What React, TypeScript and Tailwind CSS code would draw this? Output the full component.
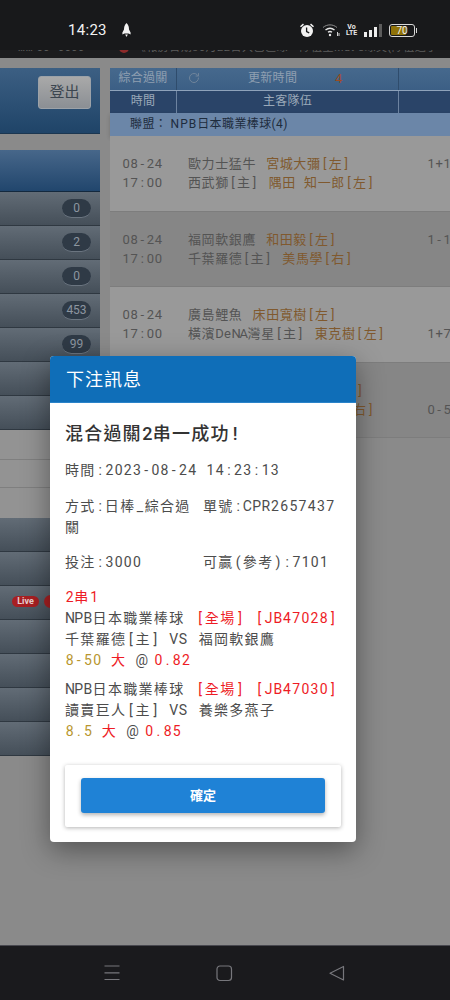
import React from 'react';
import { RotateCw } from 'lucide-react';

const font = { fontFamily: 'Roboto, "Noto Sans CJK TC", sans-serif' };

const counts = ['0', '2', '0', '453', '99', '', ''];

const games = [
  { home: '歐力士猛牛', homeP: '宮城大彌[左]', away: '西武獅[主]', awayP: '隅田 知一郎[左]', line: '1+1', low: false, dark: false },
  { home: '福岡軟銀鷹', homeP: '和田毅[左]', away: '千葉羅德[主]', awayP: '美馬學[右]', line: '1-1', low: false, dark: true },
  { home: '廣島鯉魚', homeP: '床田寬樹[左]', away: '橫濱DeNA灣星[主]', awayP: '東克樹[左]', line: '1+7', low: true, dark: false },
  { home: '養樂多燕子', homeP: '吉村貢司郎[左]', away: '讀賣巨人[主]', awayP: '戶鄉 翔征[右]', line: '0-5', low: true, dark: true },
];

// the app's font sets latin, digits and brackets on a fixed pitch, CJK keeps its own width
const Fixed: React.FC<{ text: string; pitch?: 'sm' | 'md' | 'lg' }> = ({ text, pitch = 'md' }) => {
  const width = pitch === 'sm' ? 'w-[8.1px]' : pitch === 'lg' ? 'w-[11px]' : 'w-[9.2px]';
  return (
    <>
      {text.split('').map((ch, i) =>
        ch.charCodeAt(0) < 128 ? (
          <span key={i} className={`inline-block text-center tracking-normal ${width}`}>
            {ch === ' ' ? '\u00a0' : ch}
          </span>
        ) : (
          <React.Fragment key={i}>{ch}</React.Fragment>
        ),
      )}
    </>
  );
};

const SideRow: React.FC<{ count?: string; live?: boolean }> = ({ count, live }) => (
  <div className="h-[34px] flex items-center justify-end pr-[9px] bg-gradient-to-b from-[#626c76] to-[#454f59] border-b border-[#2f3841] relative">
    {live && (
      <div className="absolute left-[12px] top-[10px] h-[11px] w-[27px] rounded-full bg-[#a81f22] text-[#e8d0d0] text-[9px] font-bold leading-[11px] text-center">
        Live
      </div>
    )}
    {live && <div className="absolute left-[44px] top-[9px] h-[13px] w-[13px] rounded-full bg-[#a81f22]" />}
    {count && (
      <div className="h-[19px] w-[29px] rounded-full bg-[#2f3a46] border-b border-[#6b7580] text-[#8d96a0] text-[12px] leading-[18px] text-center">
        {count}
      </div>
    )}
  </div>
);

const GameRow: React.FC<{ game: (typeof games)[number] }> = ({ game }) => (
  <div className={`h-[75.5px] flex items-center pl-[12px] border-b border-[#7d7d7d] text-[13px] leading-[19px] text-[#545454] ${game.dark ? 'bg-[#868686]' : 'bg-[#999999]'}`}>
    <div className="w-[66px] shrink-0">
      <div><Fixed text="08-24" pitch="sm" /></div>
      <div><Fixed text="17:00" pitch="sm" /></div>
    </div>
    <div className="w-[239px] shrink-0 tracking-[0.6px] whitespace-nowrap">
      <div>
        <Fixed text={game.home + ' '} pitch="sm" />
        <span className="ml-[2px] text-[#80592e]"><Fixed text={game.homeP} pitch="sm" /></span>
      </div>
      <div>
        <Fixed text={game.away + ' '} pitch="sm" />
        <span className="ml-[2px] text-[#80592e]"><Fixed text={game.awayP} pitch="sm" /></span>
      </div>
    </div>
    <div className={`whitespace-nowrap ${game.low ? 'mt-[19px]' : 'mb-[19px]'}`}>
      <Fixed text={game.line} pitch="sm" />
    </div>
  </div>
);

const BetLeg: React.FC<{ code: string; teams: string; opp: string; line: string; odds: string }> = ({ code, teams, opp, line, odds }) => (
  <div>
    <div className="whitespace-nowrap">
      <Fixed text="NPB日本職業棒球 " />
      <span className="ml-[2px] text-[#ee1c25]"><Fixed text={`[全場] `} /></span>
      <span className="ml-[1px] text-[#ee1c25]"><Fixed text={`[${code}]`} /></span>
    </div>
    <div className="whitespace-nowrap">
      <Fixed text={`${teams} VS `} />
      <span className="ml-[2px]">{opp}</span>
    </div>
    <div className="whitespace-nowrap">
      <span className="text-[#b8962e]"><Fixed text={line} /></span>
      <span className="text-[#ee1c25]"><Fixed text=" 大" /></span>
      <Fixed text=" @ " />
      <span className="text-[#ee1c25]"><Fixed text={odds} /></span>
    </div>
  </div>
);

const StatusIcons = () => (
  <div className="ml-auto flex items-center mr-[33px]">
    <svg width="16" height="16" viewBox="0 0 16 16" fill="#f2f2f2">
      <circle cx="8" cy="9" r="6" />
      <path d="M1 4.2 4 1.6 5 2.7 2 5.3zM15 4.2 12 1.6 11 2.7 14 5.3z" />
      <path d="M7.6 5.5v4l2.6 1.4" stroke="#18191b" strokeWidth="1.3" fill="none" />
    </svg>
    <svg className="ml-[7px]" width="18" height="14" viewBox="0 0 18 14" fill="none" stroke="#e8e8e8">
      <path d="M1 4.5C5 1 11 1 15 4.5" strokeWidth="1" stroke="#8d8d8d" />
      <path d="M3.5 7C6.5 4.6 9.5 4.6 12.5 7" strokeWidth="1.4" />
      <path d="M6 9.3c1.400-1 2.600-1 4 0" strokeWidth="1.4" />
      <circle cx="8" cy="12" r="1.2" fill="#e8e8e8" stroke="none" />
      <path d="M15.500 9v4M17 10v3" strokeWidth="0.9" />
    </svg>
    <div className="ml-[6px] w-[11px] text-[7px] leading-[6px] font-bold text-[#e8e8e8] text-center">
      <div>Vo</div>
      <div>LTE</div>
    </div>
    <div className="ml-[7px] flex items-end gap-[2px] h-[13px]">
      <div className="w-[3px] h-[5px] bg-[#ededed]" />
      <div className="w-[3px] h-[7px] bg-[#ededed]" />
      <div className="w-[3px] h-[10px] bg-[#ededed]" />
      <div className="w-[3px] h-[13px] bg-[#5c5c5c]" />
    </div>
    <div className="ml-[7px] relative h-[13px] w-[26px] rounded-[3px] border border-[#d8d8d8] p-[1px]">
      <div className="h-full w-[68%] rounded-[1px] bg-[#8f7208]" />
      <div className="absolute inset-0 text-center text-[10px] leading-[11px] text-[#f1f1f1]">70</div>
    </div>
    <div className="ml-[1px] h-[5px] w-[1px] bg-[#d8d8d8]" />
  </div>
);

export default function App() {
  return (
    <div className="relative h-[1000px] w-[450px] overflow-hidden flex flex-col bg-[#8a8a8a]" style={font}>
      {/* status bar */}
      <div className="h-[50px] shrink-0 bg-[#18191b] flex items-center pt-[10px] pl-[68px]">
        <span className="text-[15px] text-[#f2f2f2] tracking-[0.3px]">14:23</span>
        <svg className="ml-[15px]" width="9" height="14" viewBox="0 0 9 14" fill="#f2f2f2">
          <path d="M4.500 0C6.500 2 7 4 7 6.500L8.600 9.500V11.500L6.500 10.500H2.500L.4 11.500V9.500L2 6.500C2 4 2.500 2 4.500 0Z" />
          <path d="M3.200 11.500h2.600L4.500 14z" />
        </svg>
        <StatusIcons />
      </div>

      {/* marquee strip, cut off by the page */}
      <div className="h-[8px] shrink-0 bg-[#1c1c1e] overflow-hidden relative">
        <div className="absolute -top-[9px] left-0 flex items-center whitespace-nowrap text-[11px] leading-[14px] text-[#5c5c5c] tracking-[0.5px]">
          <span className="w-[50px] text-right">…… 00</span>
          <span className="ml-[8px]">0000</span>
          <span className="ml-[34px] h-[10px] w-[10px] rounded-full bg-[#8c2a2a]" />
          <span className="ml-[6px]">《報房日期30月22日大巴區球，隊伍主Mat 8球員(隊伍送手</span>
        </div>
      </div>

      <div className="flex-1 flex pt-[10px] min-h-0">
        {/* left menu */}
        <div className="w-[100px] shrink-0">
          <div className="h-[66px] bg-gradient-to-b from-[#3c5f83] to-[#1f4468] border-b border-[#1b3650] flex justify-end items-start pt-[8px] pr-[9px]">
            <div className="h-[33px] w-[53px] rounded-[3px] bg-gradient-to-b from-[#a9a9a9] to-[#8b8f94] border border-[#9ca2a8] text-[#3c4650] text-[15px] leading-[31px] text-center">
              登出
            </div>
          </div>
          <div className="mt-[16px] h-[42px] bg-gradient-to-b from-[#47678a] to-[#21466d] border-b border-[#14293e]" />
          {counts.map((c, i) => (
            <SideRow key={i} count={c} />
          ))}
          <div className="h-[30px] bg-[#939393] border-b border-[#7f7f7f]" />
          <div className="h-[28px] bg-[#939393] border-b border-[#7f7f7f]" />
          <div className="h-[30px] bg-[#939393]" />
          <SideRow />
          <SideRow />
          <SideRow live />
          <SideRow />
          <SideRow />
          <SideRow />
          <SideRow />
        </div>

        {/* odds table */}
        <div className="ml-[10px] flex-1 min-w-0 text-[12px]">
          <div className="h-[22px] flex bg-gradient-to-b from-[#46698d] to-[#3c5f85] text-[#8f9fb1] leading-[21px] tracking-[0.3px]">
            <div className="w-[67px] text-center border-r border-[#2f4c6c]">綜合過關</div>
            <div className="w-[222px] relative pl-[71px] border-r border-[#2f4c6c]">
              <RotateCw className="absolute left-[11px] top-[4px] h-[12px] w-[12px] text-[#6f849b]" />
              <span>更新時間</span>
              <span className="absolute left-[158px] text-[13px] text-[#9c4a22]">4</span>
            </div>
          </div>
          <div className="h-[23px] flex bg-[#2a4468] border-t border-[#8ea2ba] text-[#9aa9b9] leading-[21px] tracking-[0.3px]">
            <div className="w-[67px] text-center border-r border-[#6d83a0]">時間</div>
            <div className="w-[222px] text-center border-r border-[#6d83a0]">主客隊伍</div>
          </div>
          <div className="h-[23px] bg-[#6b86a8] pl-[20px] leading-[23px] text-[#1e2c3d] tracking-[0.4px] shadow-[0_2px_4px_rgba(0,0,0,0.18)]">
            聯盟： <span className="tracking-[1px]">NPB</span>日本職業棒球(4)
          </div>
          {games.map((g, i) => (
            <GameRow key={i} game={g} />
          ))}
        </div>
      </div>

      {/* nav bar */}
      <div className="h-[55px] shrink-0 bg-[#1a1a1d] border-t border-[#48484f] relative">
        <svg className="absolute left-[104px] top-[19px]" width="17" height="16" viewBox="0 0 17 16" fill="none" stroke="#77777c" strokeWidth="1.200">
          <path d="M.5 1h15M.5 7.800h15M.5 14.500h15" />
        </svg>
        <svg className="absolute left-[216px] top-[19px]" width="17" height="17" viewBox="0 0 17 17" fill="none" stroke="#77777c" strokeWidth="1.200">
          <rect x="1" y="1" width="14.500" height="14.500" rx="3" />
        </svg>
        <svg className="absolute left-[329px] top-[19px]" width="16" height="17" viewBox="0 0 16 17" fill="none" stroke="#77777c" strokeWidth="1.200">
          <path d="M14.500 1.500v13.500L1 8.200z" strokeLinejoin="round" />
        </svg>
      </div>

      {/* bet dialog */}
      <div className="absolute left-[50px] top-[356px] w-[306px] h-[486px] rounded-[4px] bg-white overflow-hidden shadow-[0_8px_28px_rgba(0,0,0,0.4)] flex flex-col text-[14px] leading-[21px] tracking-[1.300px] text-[#4c4c4c]">
        <div className="h-[47px] shrink-0 bg-[#0f6eb8] border-b border-[#2a83c9] pl-[16px] text-[18px] leading-[47px] tracking-[1px] text-white">
          下注訊息
        </div>
        <div className="px-[15px] pt-[19px] flex-1 flex flex-col">
          <div className="text-[18px] leading-[24px] font-medium tracking-[1.200px] text-[#333333]">
            <Fixed text="混合過關2串一成功!" pitch="lg" />
          </div>
          <div className="mt-[14px]"><Fixed text="時間:2023-08-24 14:23:13" /></div>
          <div className="mt-[15px] grid grid-cols-2">
            <div><Fixed text="方式:日棒_綜合過關" /></div>
            <div><Fixed text="單號:CPR2657437" /></div>
          </div>
          <div className="mt-[14px] grid grid-cols-2">
            <div><Fixed text="投注:3000" /></div>
            <div><Fixed text="可贏(參考):7101" /></div>
          </div>
          <div className="mt-[14px] text-[#ee1c25]"><Fixed text="2串1" /></div>
          <BetLeg code="JB47028" teams="千葉羅德[主]" opp="福岡軟銀鷹" line="8-50" odds="0.82" />
          <div className="mt-[8px]">
            <BetLeg code="JB47030" teams="讀賣巨人[主]" opp="養樂多燕子" line="8.5" odds="0.85" />
          </div>
          <div className="mt-[23px] h-[62px] rounded-[2px] bg-white shadow-[0_1px_4px_rgba(0,0,0,0.3)] px-[16px] pt-[13px]">
            <button className="h-[35px] w-full rounded-[3px] bg-[#1f82d6] text-white text-[13px] font-bold tracking-normal shadow-[0_2px_4px_rgba(0,0,0,0.3)]">
              確定
            </button>
          </div>
        </div>
      </div>
    </div>
  );
}
